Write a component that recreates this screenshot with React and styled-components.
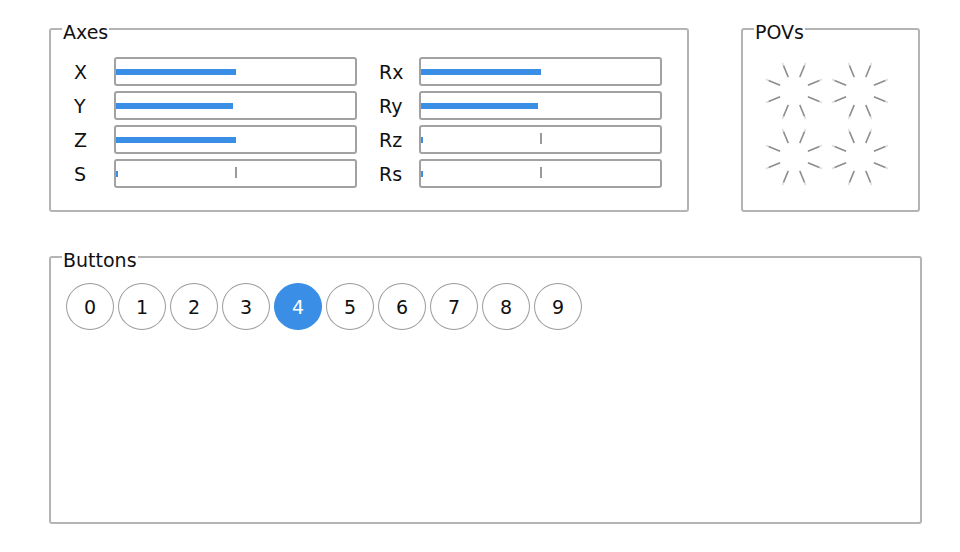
import React from 'react';
import styled, { createGlobalStyle } from 'styled-components';

const BLUE = '#3a8ee6';

const LEFT_AXES = [
  { name: 'X', value: 0.5 },
  { name: 'Y', value: 0.49 },
  { name: 'Z', value: 0.5 },
  { name: 'S', value: 0 },
];

const RIGHT_AXES = [
  { name: 'Rx', value: 0.5 },
  { name: 'Ry', value: 0.49 },
  { name: 'Rz', value: 0 },
  { name: 'Rs', value: 0 },
];

const BUTTONS = [0, 1, 2, 3, 4, 5, 6, 7, 8, 9];
const PRESSED = 4;

const GlobalStyle = createGlobalStyle`
  html, body {
    margin: 0;
    background: #fff;
  }
  body {
    font-family: "DejaVu Sans", "Liberation Sans", sans-serif;
    color: #111;
  }
`;

const Pov = () => {
  const spokes = [];
  for (let i = 0; i < 8; i++) {
    const a = ((22.5 + i * 45) * Math.PI) / 180;
    const sx = Math.sin(a);
    const sy = -Math.cos(a);
    spokes.push(
      <g key={i}>
        <line
          x1={33 + sx * 27.5} y1={33 + sy * 27.5}
          x2={33 + sx * 30.5} y2={33 + sy * 30.5}
          stroke="#e0e0e0" strokeWidth="1.8"
        />
        <line
          x1={33 + sx * 15} y1={33 + sy * 15}
          x2={33 + sx * 27.5} y2={33 + sy * 27.5}
          stroke="#8c8c8c" strokeWidth="1.5"
        />
      </g>
    );
  }
  return (
    <svg width="66" height="66" viewBox="0 0 66 66">
      {spokes}
    </svg>
  );
};

const AxisColumn = ({ axes }) => (
  <Column>
    {axes.map((a) => (
      <AxisRow key={a.name}>
        <AxisLabel>{a.name}</AxisLabel>
        <Bar>
          {a.value === 0 && <CenterTick />}
          <Fill style={{ width: `${a.value * 100}%` }} />
        </Bar>
      </AxisRow>
    ))}
  </Column>
);

const App = () => {
  return (
    <>
      <GlobalStyle />
      <Page>
        <TopRow>
          <Group $width={640} $height={184}>
            <Caption>Axes</Caption>
            <AxesBody>
              <AxisColumn axes={LEFT_AXES} />
              <AxisColumn axes={RIGHT_AXES} />
            </AxesBody>
          </Group>
          <Group $width={179} $height={184}>
            <Caption>POVs</Caption>
            <PovGrid>
              {[0, 1, 2, 3].map((i) => (
                <Pov key={i} />
              ))}
            </PovGrid>
          </Group>
        </TopRow>
        <Group $width={873} $height={268}>
          <Caption>Buttons</Caption>
          <ButtonRow>
            {BUTTONS.map((b) => (
              <ButtonDot key={b} $on={b === PRESSED}>
                {b}
              </ButtonDot>
            ))}
          </ButtonRow>
        </Group>
      </Page>
    </>
  );
};

const Page = styled.div`
  padding: 28px 0 0 49px;
  display: flex;
  flex-direction: column;
  gap: 44px;
`;

const TopRow = styled.div`
  display: flex;
  gap: 52px;
`;

const Group = styled.section`
  position: relative;
  box-sizing: border-box;
  width: ${(p) => p.$width}px;
  height: ${(p) => p.$height}px;
  border: 2px solid #b4b4b4;
  border-radius: 3px;
`;

const Caption = styled.span`
  position: absolute;
  top: -9px;
  left: 11px;
  padding: 0 1px;
  background: #fff;
  font-size: 19px;
  line-height: 22px;
  color: #111;
`;

const AxesBody = styled.div`
  display: flex;
  gap: 22px;
  padding: 27px 0 0 23px;
`;

const Column = styled.div`
  display: flex;
  flex-direction: column;
  gap: 5px;
`;

const AxisRow = styled.div`
  display: flex;
  align-items: center;
  height: 29px;
`;

const AxisLabel = styled.span`
  width: 40px;
  font-size: 19px;
  line-height: 22px;
  color: #111;
`;

const Bar = styled.div`
  position: relative;
  box-sizing: border-box;
  width: 243px;
  height: 29px;
  border: 2px solid #a2a2a2;
  border-radius: 3px;
  display: flex;
  align-items: center;
`;

const CenterTick = styled.div`
  position: absolute;
  left: calc(50% - 1px);
  top: 6px;
  width: 2px;
  height: 11px;
  background: #9a9a9a;
`;

const Fill = styled.div`
  position: relative;
  min-width: 2px;
  height: 6px;
  background: ${BLUE};
`;

const PovGrid = styled.div`
  display: grid;
  grid-template-columns: 66px 66px;
  grid-auto-rows: 66px;
  padding: 28px 0 0 18px;
`;

const ButtonRow = styled.div`
  display: flex;
  gap: 4px;
  padding: 25px 0 0 15px;
`;

const ButtonDot = styled.div`
  box-sizing: border-box;
  width: 48px;
  height: 47px;
  border-radius: 50%;
  border: 1.6px solid ${(p) => (p.$on ? BLUE : '#9c9c9c')};
  background: ${(p) => (p.$on ? BLUE : '#fff')};
  color: ${(p) => (p.$on ? '#fff' : '#111')};
  display: flex;
  align-items: center;
  justify-content: center;
  font-size: 19px;
`;

export default App;
